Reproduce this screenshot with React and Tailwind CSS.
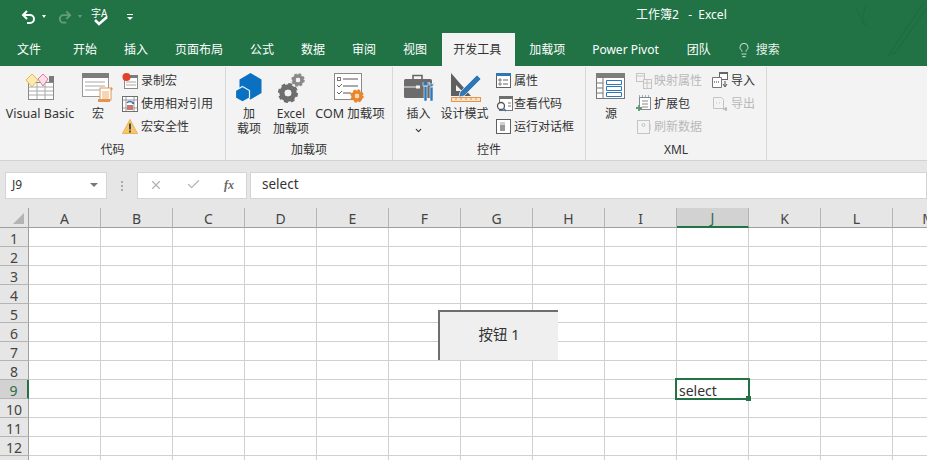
import React from 'react';
import { Lightbulb, ChevronDown, X, Check } from 'lucide-react';

const FONT = '"Noto Sans", "Noto Sans CJK SC", sans-serif';
const COLS = ['A', 'B', 'C', 'D', 'E', 'F', 'G', 'H', 'I', 'J', 'K', 'L', 'M'];
const ROWS = [1, 2, 3, 4, 5, 6, 7, 8, 9, 10, 11, 12, 13];
const TABS = ['开始', '插入', '页面布局', '公式', '数据', '审阅', '视图'];

const Gear = ({ cx, cy, r, color, hole = '#f3f3f3' }) => (
  <g>
    <circle cx={cx} cy={cy} r={r} fill="none" stroke={color} strokeWidth={r * 0.9} />
    <circle cx={cx} cy={cy} r={r * 1.4} fill="none" stroke={color} strokeWidth={r * 0.55} strokeDasharray={`${r * 0.6} ${r * 0.5}`} />
    <circle cx={cx} cy={cy} r={r * 0.55} fill={hole} />
  </g>
);

// ribbon icons, drawn by hand
const VbIcon = () => (
  <svg width="32" height="28" viewBox="0 0 32 28">
    <rect x="4.5" y="9.5" width="25" height="17" fill="#fff" stroke="#8a8a8a" />
    <path d="M5 14h24M5 18h24M5 22h24M13 10v16M21 10v16" stroke="#a8a8a8" />
    <rect x="25" y="3" width="5" height="6" fill="#7a7a7a" />
    <path d="M8 1l6 6-6 7-6-7z" fill="#fbe9b2" stroke="#e8b84d" />
    <path d="M19 1l5 5-5 7-5-7z" fill="#fbdde5" stroke="#d77d97" />
  </svg>
);
const MacroIcon = () => (
  <svg width="32" height="30" viewBox="0 0 32 30">
    <rect x="0.5" y="0.5" width="26" height="23" fill="#fff" stroke="#9a9a9a" />
    <rect x="0" y="0" width="27" height="5" fill="#7d7d7d" />
    <path d="M3 9h20M3 13h20M3 17h15" stroke="#a8a8a8" />
    <rect x="18" y="15" width="11" height="12" fill="#fff" stroke="#e3954e" />
    <rect x="16" y="26" width="12" height="3" fill="#e3954e" />
    <rect x="20" y="18" width="7" height="8" fill="#f6d5b5" />
    <path d="M29 14l2 2-2 2z" fill="#e3954e" />
  </svg>
);
const RecordIcon = () => (
  <svg width="16" height="16" viewBox="0 0 16 16">
    <rect x="2.5" y="3.5" width="13" height="12" fill="#fff" stroke="#8a8a8a" />
    <rect x="8" y="2" width="8" height="3" fill="#7d7d7d" />
    <path d="M4 9h10M4 12h10" stroke="#a8a8a8" />
    <circle cx="4.5" cy="4" r="4" fill="#e0402c" />
  </svg>
);
const RelativeIcon = () => (
  <svg width="16" height="16" viewBox="0 0 16 16">
    <rect x="0.5" y="0.5" width="15" height="15" fill="#fff" stroke="#6f6f6f" />
    <path d="M1 4h14M1 12h14M4 1v14M12 1v14" stroke="#9a9a9a" />
    <rect x="5" y="9" width="6" height="5" fill="#c9776a" />
    <path d="M5 7c1-2 5-2 6 0" fill="none" stroke="#2f78b7" strokeWidth="1.3" />
    <path d="M9.5 8h2.5V5.5z" fill="#2f78b7" />
  </svg>
);
const WarnIcon = () => (
  <svg width="16" height="15" viewBox="0 0 16 15">
    <path d="M8 0.5L15.5 14.5H0.5z" fill="#f6c667" stroke="#eab35a" />
    <rect x="7" y="4.5" width="2" height="6" fill="#4a4a4a" />
    <rect x="7" y="11.5" width="2" height="2" fill="#4a4a4a" />
  </svg>
);
const AddinIcon = () => (
  <svg width="28" height="28" viewBox="0 0 28 28">
    <path d="M15.5 0L26.5 6.5V20L15.5 26.5 4.5 20V6.5z" fill="#0a71c2" />
    <path d="M7.5 13.5L14.5 17.5V25L7.5 29 0.5 25V17.5z" fill="#0a71c2" stroke="#f3f3f3" strokeWidth="1.2" />
  </svg>
);
const GearsIcon = () => (
  <svg width="28" height="30" viewBox="0 0 28 30">
    <Gear cx={11} cy={20} r={6} color="#6e6e6e" />
    <Gear cx={21} cy={7} r={4} color="#8a8a8a" />
  </svg>
);
const ComIcon = () => (
  <svg width="32" height="32" viewBox="0 0 32 32">
    <rect x="0.5" y="0.5" width="27" height="26" fill="#fff" stroke="#8a8a8a" />
    <path d="M9 6h15M9 13h15M9 20h8" stroke="#555" />
    <rect x="3.5" y="4.5" width="3" height="3" fill="none" stroke="#777" />
    <path d="M3 12l2 2 3-3M3 19l2 2 3-3" stroke="#666" fill="none" />
    <Gear cx={23} cy={23} r={4} color="#e8862e" hole="#f8d6ae" />
  </svg>
);
const InsertIcon = () => (
  <svg width="32" height="28" viewBox="0 0 32 28">
    <path d="M10 6V2.5h9V6" fill="none" stroke="#666" strokeWidth="1.6" />
    <rect x="1" y="6" width="28" height="19" rx="1.5" fill="#6c6c6c" />
    <path d="M1 14h16" stroke="#f3f3f3" />
    <rect x="13" y="12.5" width="4" height="3" fill="#f3f3f3" />
    <path d="M21 13v15h3V13zM20 9v4h5V9" fill="#2f78b7" stroke="#f3f3f3" strokeWidth="0.6" />
    <path d="M27 14v14h3V14zM26 9c0 3 1 4 2.500 5 1.500-1 2.500-2 2.500-5l-1 2h-3z" fill="#2f78b7" stroke="#f3f3f3" strokeWidth="0.6" />
  </svg>
);
const DesignIcon = () => (
  <svg className="ml-[4px]" width="33" height="30" viewBox="0 0 33 30">
    <path d="M1 0V23H21z" fill="#5f5f5f" />
    <path d="M6 12V18H12z" fill="#f3f3f3" />
    <path d="M10 19L27 2l4 4-17 17-5 1z" fill="#2f78b7" stroke="#f3f3f3" strokeWidth="0.7" />
    <rect x="1.500" y="24.500" width="29" height="4" fill="#fbe3c4" stroke="#e3954e" />
    <path d="M6 25v2M11 25v2M16 25v2M21 25v2M26 25v2" stroke="#e3954e" />
  </svg>
);
const PropsIcon = () => (
  <svg width="15" height="15" viewBox="0 0 15 15">
    <rect x="0.500" y="0.500" width="14" height="14" fill="#fff" stroke="#5f5f5f" />
    <rect x="0" y="0" width="15" height="3" fill="#2f78b7" />
    <path d="M3 6h2v2H3zM3 10h2v2H3z" fill="none" stroke="#666" strokeWidth="0.8" />
    <path d="M7 7h5M7 11h5" stroke="#666" />
  </svg>
);
const ViewCodeIcon = () => (
  <svg width="17" height="16" viewBox="0 0 17 16">
    <rect x="3.500" y="0.500" width="13" height="14" fill="#fff" stroke="#777" />
    <rect x="3" y="0" width="14" height="3" fill="#6f6f6f" />
    <path d="M12 7h3M12 10h3" stroke="#777" />
    <circle cx="5" cy="10" r="3.500" fill="#fff" stroke="#555" strokeWidth="1.300" />
    <path d="M7.500 12.500L10 15" stroke="#2f78b7" strokeWidth="1.600" />
  </svg>
);
const RunIcon = () => (
  <svg width="15" height="15" viewBox="0 0 15 15">
    <rect x="0.500" y="0.500" width="14" height="14" fill="#fff" stroke="#5f5f5f" />
    <rect x="4" y="3" width="5" height="9" fill="#9a9a9a" />
    <rect x="4" y="3" width="5" height="3" fill="#d0d0d0" />
  </svg>
);
const SourceIcon = () => (
  <svg width="30" height="27" viewBox="0 0 30 27">
    <rect x="0.500" y="0.500" width="28" height="25" fill="#fff" stroke="#777" />
    <rect x="0" y="0" width="29" height="5" fill="#7d7d7d" />
    <path d="M7 5v20M1 10h6M1 15h6M1 20h6" stroke="#777" />
    <path d="M10.500 7.500h15v4h-15zM10.500 13.500h15v4h-15zM10.500 19.500h15v4h-15z" fill="#fff" stroke="#2f78b7" />
  </svg>
);
const MapIcon = () => (
  <svg width="16" height="16" viewBox="0 0 16 16" stroke="#c4c4c4" fill="none">
    <rect x="0.500" y="0.500" width="8" height="8" />
    <rect x="7.500" y="6.500" width="8" height="9" fill="#f3f3f3" />
    <path d="M1 3h7M8 10h7M11 7v8" />
  </svg>
);
const PackIcon = () => (
  <svg width="16" height="17" viewBox="0 0 16 17">
    <rect x="3.500" y="2.500" width="11" height="12" fill="#fff" stroke="#888" />
    <path d="M6 6h6M6 9h6M6 12h6" stroke="#888" />
    <path d="M3 1h1M6 1h1M9 1h1M12 1h1" stroke="#2f78b7" />
    <path d="M3 10v6M0 13h6" stroke="#5d9a77" strokeWidth="1.800" />
  </svg>
);
const RefreshIcon = () => (
  <svg width="16" height="15" viewBox="0 0 16 15" fill="none" stroke="#c4c4c4">
    <rect x="1.500" y="1.500" width="12" height="13" />
    <path d="M14 5v6" />
    <circle cx="7.500" cy="6" r="1.500" />
  </svg>
);
const ImportIcon = () => (
  <svg width="17" height="17" viewBox="0 0 17 17">
    <rect x="7.500" y="0.500" width="8" height="7" fill="#fff" stroke="#666" />
    <rect x="7" y="0" width="9" height="2" fill="#666" />
    <path d="M0.500 5.500h9v10h-9z" fill="#fff" stroke="#777" />
    <path d="M2 10h1M4 10h1M6 10h1" stroke="#333" />
    <path d="M13 9v5M11 12l2 3 2-3" stroke="#555" fill="none" />
  </svg>
);
const ExportIcon = () => (
  <svg width="17" height="16" viewBox="0 0 17 16" fill="none" stroke="#c4c4c4">
    <path d="M1.500 1.500h8l2 2v9h-10z" />
    <path d="M4 7h1M7 7h1" />
    <path d="M11 13h4M14 11v4" stroke="#b4b4b4" strokeWidth="1.400" />
  </svg>
);

const QuickBar = () => (
  <div className="flex items-center h-[33px] bg-[#217346] relative">
    <div className="flex items-center pl-[21px]">
      <svg width="16" height="14" viewBox="0 0 16 14" fill="none" stroke="#fff" strokeWidth="2">
        <path d="M6 1L2 5l4 4M2 5h7a4 4 0 0 1 0 8H6" />
      </svg>
      <div className="ml-[5px] w-0 h-0 border-x-[2.5px] border-x-transparent border-t-[3px] border-t-white" />
      <svg className="ml-[11px] opacity-30" width="15" height="14" viewBox="0 0 16 14" fill="none" stroke="#fff" strokeWidth="2">
        <path d="M10 1l4 4-4 4M14 5H7a4 4 0 0 0 0 8h3" />
      </svg>
      <div className="ml-[6px] w-0 h-0 border-x-[2.5px] border-x-transparent border-t-[3px] border-t-white opacity-30" />
      <div className="ml-[9px] relative w-[18px] h-[18px]">
        <span className="absolute left-0 -top-[2px] text-[10px] text-white leading-[14px]">字A</span>
        <svg className="absolute left-[3px] top-[8px]" width="14" height="10" viewBox="0 0 14 10" fill="none" stroke="#fff" strokeWidth="2.500">
          <path d="M1 4l4 4 8-7" />
        </svg>
      </div>
      <div className="ml-[18px] flex flex-col items-center gap-[2px]">
        <div className="w-[6px] h-px bg-white" />
        <div className="w-0 h-0 border-x-[3px] border-x-transparent border-t-[3px] border-t-white" />
      </div>
    </div>
    <span className="absolute left-[636px] top-[6px] text-[12px] leading-[18px] text-white whitespace-pre">工作簿2   -  Excel</span>
    <svg className="absolute right-0 top-0" width="75" height="60" viewBox="0 0 75 60" fill="none" stroke="#1f6d43" strokeWidth="1.500">
      <path d="M72 2L40 50l-4 6 8-4 32-46M4 8c4 10 8 14 10 18M14 4c-2 8-4 14-4 20" />
    </svg>
  </div>
);

const TabBar = () => (
  <div className="flex items-end h-[33px] bg-[#217346] pl-[6px] gap-[5px] text-[12px] text-white">
    <div className="px-[11px] h-[33px] flex items-center mr-[5px]">文件</div>
    {TABS.map((t) => (
      <div key={t} className="px-[11px] h-[33px] flex items-center">{t}</div>
    ))}
    <div className="pl-[11px] pr-[14px] h-[33px] flex items-center bg-[#f3f3f3] text-[#333] -ml-[1px]">开发工具</div>
    <div className="px-[11px] h-[33px] flex items-center -ml-[2px]">加载项</div>
    <div className="px-[11px] h-[33px] flex items-center">Power Pivot</div>
    <div className="px-[11px] h-[33px] flex items-center ml-[1px]">团队</div>
    <div className="h-[33px] flex items-center gap-[4px] pl-[9px] text-[#e8f1ec]">
      <Lightbulb size={16} strokeWidth={1.300} />
      <span>搜索</span>
    </div>
  </div>
);

const BigButton = ({ icon, width, children, className = '' }) => (
  <div className="flex flex-col items-center shrink-0" style={{ width }}>
    <div className="h-[32px] flex items-start justify-center">{icon}</div>
    <div className={`text-center leading-[14.500px] pt-[2px] whitespace-nowrap ${className}`}>{children}</div>
  </div>
);

const SmallButton = ({ icon, label, muted, iconWidth = 19 }) => (
  <div className={`h-[23px] flex items-center whitespace-nowrap ${muted ? 'text-[#b9b9b9]' : 'text-[#333]'}`}>
    <div className="flex items-center shrink-0" style={{ width: iconWidth }}>{icon}</div>
    <span>{label}</span>
  </div>
);

const Group = ({ width, label, children, className = '' }) => (
  <div className="h-[93px] border-r border-[#d8d8d8] flex flex-col shrink-0 my-[1px]" style={{ width }}>
    <div className={`flex h-[75px] pt-[6px] ${className}`}>{children}</div>
    <div className="text-center text-[12px] leading-[16px] text-[#333]">{label}</div>
  </div>
);

const Ribbon = () => (
  <div className="flex h-[95px] bg-[#f3f3f3] border-b border-[#d2d2d2] text-[12px] text-[#333]">
    <Group width={226} label="代码" className="pl-[2px]">
      <BigButton width={76} icon={<VbIcon />} className="text-[12.500px]">Visual Basic</BigButton>
      <BigButton width={40} icon={<MacroIcon />}>宏</BigButton>
      <div className="-mt-[4px] ml-[4px]">
        <SmallButton icon={<RecordIcon />} label="录制宏" />
        <SmallButton icon={<RelativeIcon />} label="使用相对引用" />
        <SmallButton icon={<WarnIcon />} label="宏安全性" />
      </div>
    </Group>
    <Group width={167} label="加载项" className="pl-[4px]">
      <BigButton width={38} icon={<AddinIcon />}>加<br />载项</BigButton>
      <BigButton width={46} icon={<GearsIcon />}>Excel<br />加载项</BigButton>
      <BigButton width={72} icon={<ComIcon />} className="text-[12.500px]">COM 加载项</BigButton>
    </Group>
    <Group width={193} label="控件" className="pl-[7px]">
      <BigButton width={37} icon={<InsertIcon />}>
        插入
        <ChevronDown size={9} strokeWidth={3} className="mx-auto mt-[4px]" />
      </BigButton>
      <BigButton width={55} icon={<DesignIcon />}>设计模式</BigButton>
      <div className="-mt-[4px] ml-[4px]">
        <SmallButton iconWidth={18} icon={<PropsIcon />} label="属性" />
        <SmallButton iconWidth={18} icon={<ViewCodeIcon />} label="查看代码" />
        <SmallButton iconWidth={18} icon={<RunIcon />} label="运行对话框" />
      </div>
    </Group>
    <Group width={181} label="XML" className="pl-[8px]">
      <BigButton width={34} icon={<SourceIcon />}>源</BigButton>
      <div className="-mt-[4px] ml-[8px]">
        <SmallButton iconWidth={18} muted icon={<MapIcon />} label="映射属性" />
        <SmallButton iconWidth={18} icon={<PackIcon />} label="扩展包" />
        <SmallButton iconWidth={18} muted icon={<RefreshIcon />} label="刷新数据" />
      </div>
      <div className="-mt-[4px] ml-[10px]">
        <SmallButton icon={<ImportIcon />} label="导入" />
        <SmallButton muted icon={<ExportIcon />} label="导出" />
      </div>
    </Group>
  </div>
);

const FormulaBar = () => (
  <div className="flex h-[27px] mt-[11px] pl-[5px] text-[12px] text-[#333]">
    <div className="w-[102px] bg-white border border-[#d4d4d4] flex items-center justify-between pl-[6px] pr-[8px] pb-[2px]">
      <span>J9</span>
      <div className="w-0 h-0 border-x-[4px] border-x-transparent border-t-[4px] border-t-[#777]" />
    </div>
    <div className="w-[30px] flex flex-col items-center justify-center gap-[2px]">
      <div className="w-[2px] h-[2px] bg-[#aaa]" />
      <div className="w-[2px] h-[2px] bg-[#aaa]" />
      <div className="w-[2px] h-[2px] bg-[#aaa]" />
    </div>
    <div className="w-[110px] bg-white border border-[#d4d4d4] flex items-center pl-[11px] text-[#b4b4b4] pb-[2px]">
      <X size={14} strokeWidth={2} />
      <Check size={15} strokeWidth={2} className="ml-[23px]" />
      <span className="ml-[23px] text-[12px] italic font-bold text-[#666] font-['Liberation_Serif']">fx</span>
    </div>
    <div className="flex-1 ml-[3px] bg-white border border-[#d4d4d4] flex items-center pl-[11px] text-[13.500px] pb-[2px]">select</div>
  </div>
);

const Sheet = () => (
  <div className="relative mt-[9px] text-[14px] text-[#444]">
    <div className="flex h-[20px]">
      <div className="w-[29px] shrink-0 bg-[#e6e6e6] border-r border-b border-[#9f9f9f] flex items-end justify-end pr-[4px] pb-[3px]">
        <div className="w-0 h-0 border-l-[11px] border-l-transparent border-b-[11px] border-b-[#b4b4b4]" />
      </div>
      {COLS.map((c) => (
        <div
          key={c}
          className={`w-[72px] shrink-0 border-r border-b flex items-center justify-center leading-[19px] pt-[1px] ${
            c === 'J' ? 'bg-[#d2d2d2] border-b-2 border-b-[#217346] border-r-[#b4b4b4] text-[#2f6b4a]' : 'bg-[#e6e6e6] border-r-[#b4b4b4] border-b-[#9f9f9f]'
          }`}
        >
          {c}
        </div>
      ))}
    </div>
    {ROWS.map((r) => (
      <div key={r} className="flex h-[19px]">
        <div
          className={`w-[29px] shrink-0 border-b border-b-[#b4b4b4] flex items-center justify-center leading-[18px] pt-[3px] ${
            r === 9 ? 'bg-[#d2d2d2] border-r-2 border-r-[#217346] text-[#2f6b4a]' : 'bg-[#e6e6e6] border-r border-r-[#9f9f9f]'
          }`}
        >
          {r}
        </div>
        {COLS.map((c) => (
          <div key={c} className="w-[72px] shrink-0 bg-white border-r border-b border-[#d0d0d0]" />
        ))}
      </div>
    ))}
    {/* form button sits on top of the cells */}
    <div className="absolute left-[438px] top-[102px] w-[120px] h-[50px] bg-[#efefef] border-t-2 border-l-2 border-[#6e6e6e] flex items-center justify-center text-[14.500px] text-[#333] pb-[2px]">
      按钮 1
    </div>
    {/* active cell */}
    <div className="absolute left-[675px] top-[170px] w-[75px] h-[22px] border-2 border-[#217346] bg-white flex items-center pl-[2px] pt-[3px] text-[14px] text-[#333] leading-[18px]">
      select
      <div className="absolute -right-[3px] -bottom-[3px] w-[5px] h-[5px] bg-[#217346]" />
    </div>
  </div>
);

export default function App() {
  return (
    <div className="relative w-[927px] h-[460px] overflow-hidden bg-[#e6e6e6]" style={{ fontFamily: FONT }}>
      <QuickBar />
      <TabBar />
      <Ribbon />
      <FormulaBar />
      <Sheet />
    </div>
  );
}
